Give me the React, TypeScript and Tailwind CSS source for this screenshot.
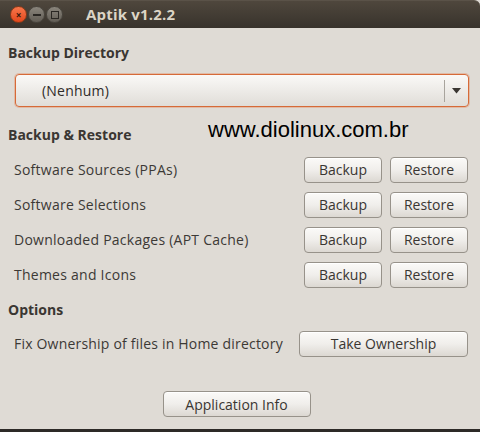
import React from "react";

const font = { fontFamily: '"Open Sans", "Noto Sans", "DejaVu Sans", sans-serif' };

function Btn({ children, className = "" }: { children: React.ReactNode; className?: string }) {
  return (
    <div
      className={
        "flex items-center justify-center rounded-[4px] border border-[#97928a] bg-gradient-to-b from-[#fbfaf8] via-[#f0eeeb] to-[#dcd8d2] text-[14px] text-[#3a3632] shadow-[inset_0_1px_0_#ffffff] " +
        className
      }
    >
      {children}
    </div>
  );
}

function Row({ label }: { label: string }) {
  return (
    <div className="flex h-[35px] items-center pl-[14px] pr-[12px]">
      <div className="flex-1 text-[14px] tracking-[0.25px] text-[#3c3935]">{label}</div>
      <Btn className="h-[26px] w-[78px]">Backup</Btn>
      <Btn className="ml-[8px] h-[26px] w-[78px]">Restore</Btn>
    </div>
  );
}

export default function App() {
  return (
    <div className="relative h-[432px] w-[480px] overflow-hidden bg-[#2d2a27]" style={font}>
      <div className="flex h-[429px] flex-col bg-[#dfdbd5]">
        {/* title bar */}
        <div className="flex h-[28px] items-center rounded-tr-[6px] border-t border-[#5a5248] bg-gradient-to-b from-[#4f473d] to-[#38332c]">
          <div className="ml-[10px] flex h-[17px] w-[17px] items-center justify-center rounded-full border border-[#8a3a18] bg-gradient-to-b from-[#f7764a] to-[#e2461a] text-[10px] font-bold leading-none text-[#3a1a0c]">
            ×
          </div>
          <div className="ml-[1px] flex h-[17px] w-[17px] items-center justify-center rounded-full border border-[#4a463f] bg-gradient-to-b from-[#8a857c] to-[#625d55]">
            <div className="h-[2px] w-[8px] bg-[#2a2723]" />
          </div>
          <div className="ml-[1px] flex h-[17px] w-[17px] items-center justify-center rounded-full border border-[#4a463f] bg-gradient-to-b from-[#8a857c] to-[#625d55]">
            <div className="h-[8px] w-[8px] border-[1.5px] border-[#2a2723]" />
          </div>
          <div className="ml-[23px] text-[15px] font-bold tracking-[0.2px] text-[#dcd5c6]">Aptik v1.2.2</div>
        </div>

        {/* body */}
        <div className="relative flex flex-1 flex-col">
          <div className="mt-[14px] flex h-[20px] items-center pl-[8px] text-[14px] font-bold text-[#3a3632]">
            Backup Directory
          </div>
          <div className="ml-[15px] mr-[11px] mt-[12px] flex h-[33px] items-center rounded-[4px] border border-[#d66a38] bg-gradient-to-b from-[#faf9f7] to-[#e0ddd8] shadow-[0_0_0_1px_rgba(230,130,80,0.35)]">
            <div className="flex-1 pl-[26px] text-[14px] tracking-[0.2px] text-[#2e2b28]">(Nenhum)</div>
            <div className="h-[22px] w-px bg-[#a8a49d]" />
            <div className="flex w-[23px] justify-center">
              <svg width="9" height="6" viewBox="0 0 9 6">
                <path d="M0 0 L9 0 L4.5 5.5 Z" fill="#3a3632" />
              </svg>
            </div>
          </div>
          <div className="relative mt-[17px] flex h-[20px] items-center pl-[8px] text-[14px] font-bold text-[#3a3632]">
            Backup &amp; Restore
            <div
              className="absolute left-[208px] top-[-5px] text-[22px] font-normal leading-none text-black"
              style={{ fontFamily: '"Liberation Sans", Arial, sans-serif' }}
            >
              www.diolinux.com.br
            </div>
          </div>
          <div className="mt-[8px]">
            <Row label="Software Sources (PPAs)" />
            <Row label="Software Selections" />
            <Row label="Downloaded Packages (APT Cache)" />
            <Row label="Themes and Icons" />
          </div>
          <div className="mt-[7px] flex h-[20px] items-center pl-[8px] text-[14px] font-bold text-[#3a3632]">
            Options
          </div>
          <div className="mt-[7px] flex h-[35px] items-center pl-[14px] pr-[12px]">
            <div className="flex-1 text-[14px] tracking-[0.2px] text-[#3c3935]">Fix Ownership of files in Home directory</div>
            <Btn className="h-[26px] w-[169px]">Take Ownership</Btn>
          </div>
          <div className="mt-[30px] flex justify-center pr-[7px]">
            <Btn className="h-[26px] w-[148px]">Application Info</Btn>
          </div>
        </div>
      </div>
    </div>
  );
}
